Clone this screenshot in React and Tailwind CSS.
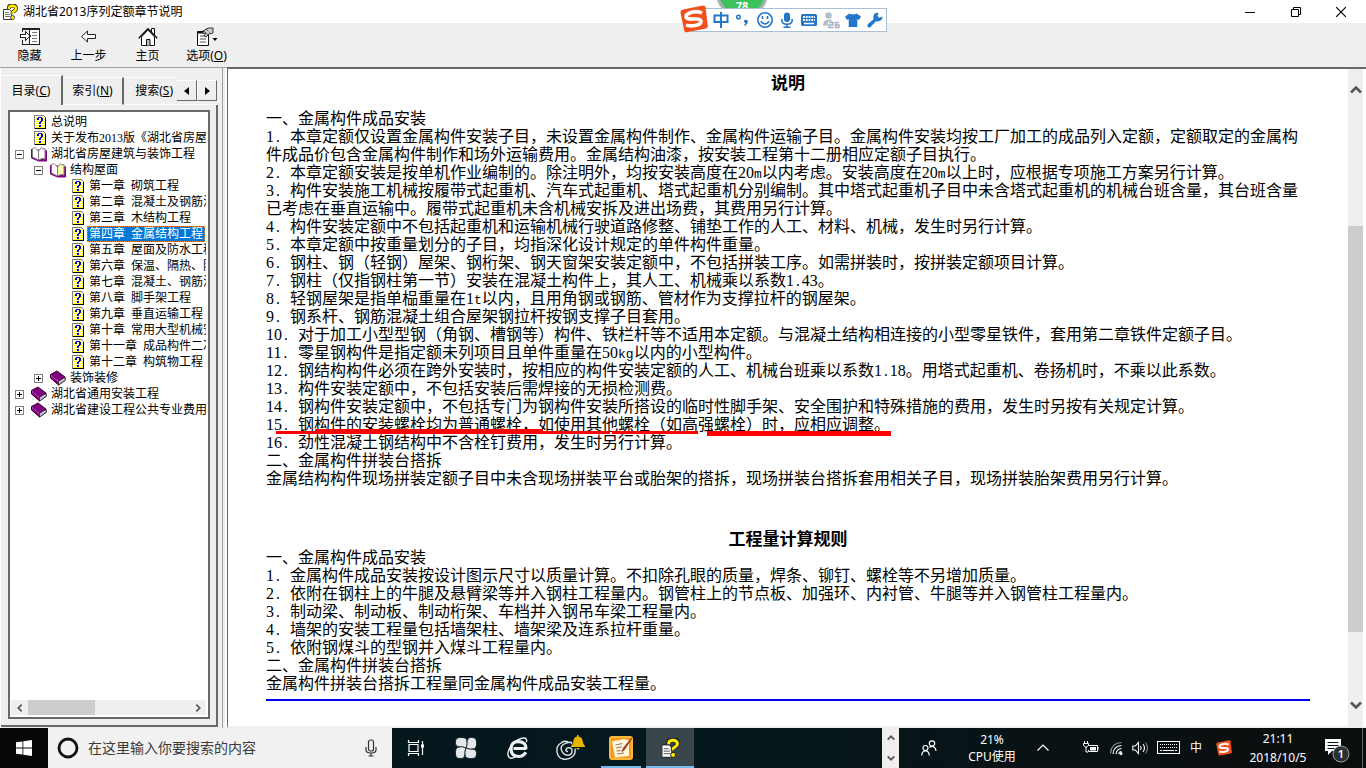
import React from "react";

const UI_FONT = "font-['Noto_Sans','Noto_Sans_CJK_SC',sans-serif]";
const TEXT_FONT = "font-['Noto_Sans_CJK_SC',sans-serif]";

/* Half-width runs: digits are half an em in the serif face, the other
   latin signs and spaces come from a monospace face at `size`. */
function Mixed({ text, size }) {
  return text.split(/([0-9]+|[^0-9\u0080-\uffff]+)/).map((part, i) => {
    if (/^[0-9]+$/.test(part)) {
      return (
        <span key={i} className="font-['Liberation_Serif',serif] leading-[0]">
          {part}
        </span>
      );
    }
    if (/^[\x20-\x7e]+$/.test(part)) {
      return (
        <span key={i} className={`whitespace-pre font-['Liberation_Mono',monospace] leading-[0] ${size}`}>
          {part}
        </span>
      );
    }
    return part;
  });
}

/* ---------- icons ---------- */

function AppIcon({ className }) {
  return (
    <svg viewBox="0 0 16 16" className={className} aria-hidden="true">
      <path d="M1.5 5.5h6l2 2v8h-8z" fill="#fff" stroke="#333" />
      <path d="M3 8.5h4M3 10.5h5M3 12.5h5" stroke="#777" />
      <path d="M7 5V3.5Q7 1.500 10.500 1.500T14 4.500Q14 6 12 7.200T10.700 9.500" fill="none" stroke="#222" strokeWidth="4" />
      <path d="M7 5V3.800Q7.500 1.800 10.500 1.800T14 4.500Q14 6 12 7.200T10.700 9.500" fill="none" stroke="#ffee00" strokeWidth="2.400" />
      <circle cx="10.500" cy="13.500" r="2" fill="#ffee00" stroke="#222" strokeWidth=".8" />
    </svg>
  );
}

function TopicIcon() {
  return (
    <svg viewBox="0 0 16 16" className="size-4 shrink-0" shapeRendering="crispEdges" aria-hidden="true">
      <path d="M3 1h9l3 3v11H3z" fill="#808080" />
      <path d="M4 2h8l2 2v10H4z" fill="#ffffd0" />
      <path d="M5 3.500h7M5 5.500h9M5 7.500h9M5 9.500h9M5 11.500h9M5 13.500h9" stroke="#ffff00" strokeDasharray="1 1" />
      <path d="M14 4h1v11H4v-1h10z" fill="#000" />
      <path d="M6 4h1V3h4v1h1v3h-1v1h-1v2H8V8h1V7h1V4H8v2H6zM8 11h2v2H8z" fill="#0000e0" />
    </svg>
  );
}

function OpenBookIcon({ page }) {
  return (
    <svg viewBox="0 0 16 16" className="size-4 shrink-0" aria-hidden="true">
      <path d="M0.500 3v9l7 3h8V5l-1-1" fill="#800080" stroke="#800080" />
      <path d="M1.500 2.500L4 1.500l3.500 3.500v9l-6-3z" fill="#fff" stroke="#808080" />
      <path d="M7.500 14V5l3-3.500 1 1.500 2.500-.5v10.500l-3-.5z" fill={page} stroke="#808080" />
    </svg>
  );
}

function ClosedBookIcon() {
  return (
    <svg viewBox="0 0 16 16" className="size-4 shrink-0" aria-hidden="true">
      <path d="M0.500 4.500L7 1l8 6v3.500L8.500 15l-8-7z" fill="#800080" stroke="#300030" />
      <path d="M8.500 11.500l6.500-4v3L8.500 15z" fill="#fff" stroke="#222" strokeWidth=".8" />
      <path d="M9 13.200l6-3.800" stroke="#808080" strokeWidth=".8" />
      <path d="M1 5.500l7.500 6" stroke="#e0b0e0" strokeDasharray="1 1" />
    </svg>
  );
}

function HideIcon() {
  return (
    <svg viewBox="0 0 20 20" className="size-5" shapeRendering="crispEdges" aria-hidden="true">
      <path d="M2.500 5V1.500h17v16h-17V13M9.500 1.500v16M2 2.500h17" fill="none" stroke="#222" />
      <path d="M10 3h9v14h-9z" fill="#fff" />
      <path d="M12 5.500h5M12 8.500h5M12 11.500h5M12 14.500h5" stroke="#777" />
      <path d="M.5 7.500h5v-3l5 4.500-5 4.500v-3h-5z" fill="#fff" stroke="#222" />
    </svg>
  );
}

function BackIcon() {
  return (
    <svg viewBox="0 0 20 20" className="size-5" aria-hidden="true">
      <path d="M2.500 9.500l6-5.500v3.500h8v4h-8V15z" fill="#fff" stroke="#222" />
    </svg>
  );
}

function HomeIcon() {
  return (
    <svg viewBox="0 0 20 20" className="size-5" aria-hidden="true">
      <path d="M13.500 5V1.500h3V8" fill="#fff" stroke="#111" />
      <path d="M3.500 10v8.500h13V10L10 3z" fill="#fff" stroke="#111" />
      <path d="M.7 11.300L10 1.700l9.300 9.600" fill="none" stroke="#111" strokeWidth="1.300" />
      <path d="M8.500 18.500v-6h3.500v6" fill="#bbb" stroke="#111" />
    </svg>
  );
}

function OptionsIcon() {
  return (
    <svg viewBox="0 0 22 20" className="h-5 w-[22px]" aria-hidden="true">
      <path d="M1.500 4.500h11v14h-11z" fill="#fff" stroke="#111" />
      <path d="M1 5.500h12" stroke="#111" strokeWidth="2" />
      <path d="M4 9h4M4 12h6M4 15h6" stroke="#555" />
      <path d="M6 6l4-4 3-1h4v5l-4 1-3 3-2-1 2-3z" fill="#ccc" stroke="#333" />
      <path d="M7 3l5 5M10 2l4 4" stroke="#333" strokeDasharray="1 1" />
      <path d="M16.500 11h5l-2.500 3z" fill="#000" />
    </svg>
  );
}

function Chevron({ d, className }) {
  return (
    <svg viewBox="0 0 12 12" className={className} aria-hidden="true">
      <path d={d} fill="none" stroke="currentColor" strokeWidth="2.600" />
    </svg>
  );
}

const UP = "M1 8.500l5-5 5 5";
const DOWN = "M1 3.500l5 5 5-5";
const LEFT = "M8.500 1l-5 5 5 5";
const RIGHT = "M3.500 1l5 5-5 5";

function SogouLogo({ className }) {
  return (
    <svg viewBox="0 0 28 28" className={className} aria-hidden="true">
      <path d="M3 4.500L23 .5q2-.2 2.500 1.500l2.300 19q.2 2-1.800 2.500L7 27.300q-2.200.4-2.800-1.800L.5 7.500Q.2 5.200 3 4.500z" fill="#f0501c" />
      <path d="M22 8q-5-2.500-11-.5t-5 4.500q1 2.500 8 2t7 2.500q0 3-6 4t-9-.5" fill="none" stroke="#fff" strokeWidth="3.600" />
    </svg>
  );
}

const imeIcons = [
  {
    label: "中文",
    art: (
      <path d="M3.500 5.500h13v6.500h-13zM10 2v16" fill="none" stroke="currentColor" strokeWidth="2" />
    ),
  },
  {
    label: "标点",
    art: (
      <>
        <circle cx="5.500" cy="7" r="1.800" fill="none" stroke="currentColor" strokeWidth="1.500" />
        <path d="M11 10.500q2-1.500 3.500 0t-2.500 5.500l-1-.8q1.500-1.200 1.300-2.400-1.800-.3-1.300-2.300z" fill="currentColor" />
      </>
    ),
  },
  {
    label: "表情",
    art: (
      <>
        <circle cx="10" cy="10" r="7.200" fill="none" stroke="currentColor" strokeWidth="1.600" />
        <path d="M7.500 6v3M12.500 6v3M5.800 11.200q4.200 5.500 8.400 0" fill="none" stroke="currentColor" strokeWidth="1.600" />
      </>
    ),
  },
  {
    label: "语音",
    art: (
      <>
        <rect x="7" y="2.500" width="6" height="9.500" rx="3" fill="currentColor" />
        <path d="M4.800 9v1q0 4.300 5.200 4.300t5.200-4.300V9M10 14v3M6.500 17.200h7" fill="none" stroke="currentColor" strokeWidth="1.600" />
      </>
    ),
  },
  {
    label: "软键盘",
    art: (
      <>
        <rect x="2" y="4" width="16" height="12" rx="1.500" fill="currentColor" />
        <path d="M4 7h12M4 10h12" stroke="#fff" strokeWidth="1.800" strokeDasharray="1.800 1" />
        <path d="M5 13.500h10" stroke="#fff" strokeWidth="1.500" />
      </>
    ),
  },
  {
    label: "账户",
    art: (
      <>
        <circle cx="7.500" cy="5.500" r="3.200" fill="#b3bdcd" />
        <path d="M2 15.500q0-6 5.500-6 3 0 4.500 2h-5v4z" fill="#b3bdcd" />
        <path d="M8 12.500h4v2.500H8v2.500h4.500M18 12.500h-3.500v5H18V15h-3.500" fill="none" stroke="#a5b0c2" strokeWidth="1.400" />
      </>
    ),
  },
  {
    label: "皮肤",
    art: <path d="M6.500 3.500q3.500 2 7 0l4.500 3-2 3.500-1.700-1v8H5.700V9L4 10 2 6.500z" fill="currentColor" />,
  },
  {
    label: "工具",
    art: (
      <path d="M17.300 6.500l-3 1.200-1.900-1.900 1.200-2.900Q10 2 8.800 5t.1 4L2.800 14.200q-1 1.500.1 2.700t2.600 0L11 11.200q3 .8 5-.9t1.300-3.800z" fill="currentColor" />
    ),
  },
];

/* ---------- data ---------- */

const tree = [
  { depth: 0, kind: "topic", label: "总说明" },
  { depth: 0, kind: "topic", label: "关于发布2013版《湖北省房屋" },
  { depth: 0, kind: "open", label: "湖北省房屋建筑与装饰工程", page: "#fff" },
  { depth: 1, kind: "open", label: "结构屋面", page: "#ffffb0" },
  { depth: 2, kind: "topic", label: "第一章 砌筑工程" },
  { depth: 2, kind: "topic", label: "第二章 混凝土及钢筋混" },
  { depth: 2, kind: "topic", label: "第三章 木结构工程" },
  { depth: 2, kind: "topic", label: "第四章 金属结构工程", selected: true },
  { depth: 2, kind: "topic", label: "第五章 屋面及防水工程" },
  { depth: 2, kind: "topic", label: "第六章 保温、隔热、防" },
  { depth: 2, kind: "topic", label: "第七章 混凝土、钢筋混" },
  { depth: 2, kind: "topic", label: "第八章 脚手架工程" },
  { depth: 2, kind: "topic", label: "第九章 垂直运输工程" },
  { depth: 2, kind: "topic", label: "第十章 常用大型机械安" },
  { depth: 2, kind: "topic", label: "第十一章 成品构件二次" },
  { depth: 2, kind: "topic", label: "第十二章 构筑物工程" },
  { depth: 1, kind: "closed", label: "装饰装修" },
  { depth: 0, kind: "closed", label: "湖北省通用安装工程" },
  { depth: 0, kind: "closed", label: "湖北省建设工程公共专业费用" },
];

const indent = ["pl-0", "pl-[19px]", "pl-[38px]"];

const notes = [
  ["", "一、金属构件成品安装"],
  ["1.", "本章定额仅设置金属构件安装子目，未设置金属构件制作、金属构件运输子目。金属构件安装均按工厂加工的成品列入定额，定额取定的金属构件成品价包含金属构件制作和场外运输费用。金属结构油漆，按安装工程第十二册相应定额子目执行。"],
  ["2.", "本章定额安装是按单机作业编制的。除注明外，均按安装高度在20m以内考虑。安装高度在20m以上时，应根据专项施工方案另行计算。"],
  ["3.", "构件安装施工机械按履带式起重机、汽车式起重机、塔式起重机分别编制。其中塔式起重机子目中未含塔式起重机的机械台班含量，其台班含量已考虑在垂直运输中。履带式起重机未含机械安拆及进出场费，其费用另行计算。"],
  ["4.", "构件安装定额中不包括起重机和运输机械行驶道路修整、铺垫工作的人工、材料、机械，发生时另行计算。"],
  ["5.", "本章定额中按重量划分的子目，均指深化设计规定的单件构件重量。"],
  ["6.", "钢柱、钢（轻钢）屋架、钢桁架、钢天窗架安装定额中，不包括拼装工序。如需拼装时，按拼装定额项目计算。"],
  ["7.", "钢柱（仅指钢柱第一节）安装在混凝土构件上，其人工、机械乘以系数1.43。"],
  ["8.", "轻钢屋架是指单榀重量在1t以内，且用角钢或钢筋、管材作为支撑拉杆的钢屋架。"],
  ["9.", "钢系杆、钢筋混凝土组合屋架钢拉杆按钢支撑子目套用。"],
  ["10.", "对于加工小型型钢（角钢、槽钢等）构件、铁栏杆等不适用本定额。与混凝土结构相连接的小型零星铁件，套用第二章铁件定额子目。"],
  ["11.", "零星钢构件是指定额未列项目且单件重量在50kg以内的小型构件。"],
  ["12.", "钢结构构件必须在跨外安装时，按相应的构件安装定额的人工、机械台班乘以系数1.18。用塔式起重机、卷扬机时，不乘以此系数。"],
  ["13.", "构件安装定额中，不包括安装后需焊接的无损检测费。"],
  ["14.", "钢构件安装定额中，不包括专门为钢构件安装所搭设的临时性脚手架、安全围护和特殊措施的费用，发生时另按有关规定计算。"],
  ["15.", "钢构件的安装螺栓均为普通螺栓，如使用其他螺栓（如高强螺栓）时，应相应调整。"],
  ["16.", "劲性混凝土钢结构中不含栓钉费用，发生时另行计算。"],
  ["", "二、金属构件拼装台搭拆"],
  ["", "金属结构构件现场拼装定额子目中未含现场拼装平台或胎架的搭拆，现场拼装台搭拆套用相关子目，现场拼装胎架费用另行计算。"],
];

const rules = [
  ["", "一、金属构件成品安装"],
  ["1.", "金属构件成品安装按设计图示尺寸以质量计算。不扣除孔眼的质量，焊条、铆钉、螺栓等不另增加质量。"],
  ["2.", "依附在钢柱上的牛腿及悬臂梁等并入钢柱工程量内。钢管柱上的节点板、加强环、内衬管、牛腿等并入钢管柱工程量内。"],
  ["3.", "制动梁、制动板、制动桁架、车档并入钢吊车梁工程量内。"],
  ["4.", "墙架的安装工程量包括墙架柱、墙架梁及连系拉杆重量。"],
  ["5.", "依附钢煤斗的型钢并入煤斗工程量内。"],
  ["", "二、金属构件拼装台搭拆"],
  ["", "金属构件拼装台搭拆工程量同金属构件成品安装工程量。"],
];

/* ---------- parts ---------- */

function TitleBar() {
  return (
    <header className="flex h-[23px] shrink-0 items-center bg-white">
      <AppIcon className="ml-0.5 size-4" />
      <h1 className="ml-[5px] flex-1 text-xs text-black">湖北省2013序列定额章节说明</h1>
      <div className="flex pr-0.5 text-black">
        <button type="button" aria-label="最小化" className="flex h-5 w-[46px] items-center justify-center">
          <svg viewBox="0 0 10 10" className="size-2.5"><path d="M0 5.500h10" stroke="currentColor" /></svg>
        </button>
        <button type="button" aria-label="还原" className="flex h-5 w-[45px] items-center justify-center">
          <svg viewBox="0 0 10 10" className="size-2.5"><path d="M.5 2.500h7v7h-7zM2.500 2.500v-2h7v7h-2" fill="none" stroke="currentColor" /></svg>
        </button>
        <button type="button" aria-label="关闭" className="flex h-5 w-[46px] items-center justify-center">
          <svg viewBox="0 0 10 10" className="size-2.5"><path d="M0 0l10 10M10 0L0 10" stroke="currentColor" strokeWidth="1.200" /></svg>
        </button>
      </div>
    </header>
  );
}

function ToolBar() {
  const items = [
    [<HideIcon />, "隐藏"],
    [<BackIcon />, "上一步"],
    [<HomeIcon />, "主页"],
    [<OptionsIcon />, <>选项(<u>O</u>)</>],
  ];
  return (
    <nav className="flex h-11 shrink-0 bg-[#efefef]">
      {items.map(([icon, label], i) => (
        <button key={i} type="button" className="flex w-[59px] flex-col items-center pt-1 text-xs leading-[18px] whitespace-nowrap text-black">
          {icon}
          <span>{label}</span>
        </button>
      ))}
    </nav>
  );
}

function TreeRow({ item }) {
  const hasToggle = item.kind !== "topic";
  return (
    <li className={`flex h-4 items-center ${indent[item.depth]}`}>
      <span className="flex w-5 shrink-0 justify-start pl-1">
        {hasToggle && (
          <button type="button" aria-label={item.kind === "open" ? "折叠" : "展开"} className="size-[9px]">
            <svg viewBox="0 0 9 9" className="size-[9px]" shapeRendering="crispEdges">
              <path d="M.5 .5h8v8h-8z" fill="#fff" stroke="#808080" />
              <path d={item.kind === "open" ? "M2 4.500h5" : "M2 4.500h5M4.500 2v5"} stroke="#000" />
            </svg>
          </button>
        )}
      </span>
      {item.kind === "topic" && <TopicIcon />}
      {item.kind === "open" && <OpenBookIcon page={item.page} />}
      {item.kind === "closed" && <ClosedBookIcon />}
      <a
        href="#"
        className={`ml-0.5 h-4 px-0.5 text-xs leading-4 whitespace-nowrap ${
          item.selected ? "bg-[#0078d7] text-white outline-1 -outline-offset-1 outline-dotted outline-[#ff8728]" : "text-black"
        }`}
      >
        <Mixed text={item.label} size="text-[10px]" />
      </a>
    </li>
  );
}

function Sidebar() {
  return (
    <aside className="flex w-[219px] shrink-0 flex-col border-l border-white bg-[#efefef] pt-[7px] pr-px pb-px">
      <div className="flex h-[30px] shrink-0 items-end pr-px text-xs text-black" role="tablist">
        <button type="button" role="tab" aria-selected="true" className="flex h-[30px] w-[62px] items-center justify-center border-t border-r-2 border-t-white border-r-[#696969]">
          <span>目录(<u>C</u>)</span>
        </button>
        <button type="button" role="tab" aria-selected="false" className="flex h-7 w-[61px] items-center justify-center border-t border-r-2 border-b border-t-white border-r-[#696969] border-b-white">
          <span>索引(<u>N</u>)</span>
        </button>
        <button type="button" role="tab" aria-selected="false" className="flex h-7 min-w-0 flex-1 items-center justify-end border-t border-b border-white pr-1 whitespace-nowrap">
          <span>搜索(<u>S</u>)</span>
        </button>
        <div className="flex h-7 items-center border-b border-white">
          <button type="button" aria-label="向左" className="flex h-[21px] w-5 items-center justify-center border-t border-r border-b border-t-white border-r-[#696969] border-b-[#696969]">
            <svg viewBox="0 0 5 8" className="h-2 w-[5px]"><path d="M5 0v8L0 4z" /></svg>
          </button>
          <button type="button" aria-label="向右" className="flex h-[21px] w-5 items-center justify-center border-t border-r border-b border-l border-t-white border-r-[#696969] border-b-[#696969] border-l-white">
            <svg viewBox="0 0 5 8" className="h-2 w-[5px]"><path d="M0 0v8l5-4z" /></svg>
          </button>
        </div>
      </div>
      <div className="flex min-h-0 flex-1 flex-col border-r-2 border-b-2 border-[#696969] pt-[5px] pr-[6px] pb-[6px] pl-[7px]">
        <div className="flex min-h-0 flex-1 flex-col border-2 border-[#696969] bg-white pl-px pr-0.5 pb-0.5">
          <ul className="min-h-0 flex-1 overflow-hidden pt-0.5">
            {tree.map((item) => (
              <TreeRow key={item.label} item={item} />
            ))}
          </ul>
          <div className="flex h-[15px] shrink-0 items-center bg-[#efefef] text-[#555]">
            <button type="button" aria-label="向左滚动" className="flex w-[17px] justify-center">
              <Chevron d={LEFT} className="size-2" />
            </button>
            <div className="h-[15px] w-[67px] bg-[#cdcdcd]" />
            <button type="button" aria-label="向右滚动" className="ml-auto flex w-[17px] justify-center">
              <Chevron d={RIGHT} className="size-2" />
            </button>
          </div>
        </div>
      </div>
    </aside>
  );
}

function Clause({ no, text }) {
  return (
    <p className="relative">
      {no && (
        <span className={`inline-block leading-[0] ${no.length > 2 ? "w-8" : "w-6"}`}>
          <Mixed text={no} size="text-[13px]" />
        </span>
      )}
      <Mixed text={text} size="text-[13px]" />
      {no === "15." && (
        <>
          <span className="absolute top-[17px] left-[10px] h-[3px] w-[334px] bg-[#ff0000]" />
          <span className="absolute top-[15px] left-[49px] h-[5px] w-[228px] bg-[#ff0000]" />
          <span className="absolute top-[17px] left-[346px] h-[3px] w-[86px] bg-[#ff0000]" />
          <span className="absolute top-[17px] left-[441px] h-[5px] w-[184px] bg-[#ff0000]" />
        </>
      )}
    </p>
  );
}

function Document() {
  return (
    <main className="flex min-w-0 flex-1 border-t-2 border-b-2 border-l border-t-[#696969] border-b-[#f0f0f0] border-l-[#696969] bg-white">
      <article className={`min-w-0 flex-1 overflow-hidden px-[38px] pt-1 text-base leading-[18px] text-black ${TEXT_FONT}`}>
        <h2 className="text-center text-[17px] leading-[18px] font-bold">说明</h2>
        <section className="pt-[17px]">
          {notes.map(([no, text]) => (
            <Clause key={no + text} no={no} text={text} />
          ))}
        </section>
        <h2 className="pt-[43px] text-center text-[17px] leading-[18px] font-bold">工程量计算规则</h2>
        <section>
          {rules.map(([no, text]) => (
            <Clause key={no + text} no={no} text={text} />
          ))}
        </section>
        <hr className="mt-2 border-t-2 border-[#0000ff]" />
      </article>
      <div className="mr-[3px] flex w-[15px] shrink-0 flex-col items-center bg-[#efefef] py-[15px] text-[#555]">
        <button type="button" aria-label="向上滚动"><Chevron d={UP} className="size-3" /></button>
        <div className="flex w-full flex-1 flex-col pt-[130px]">
          <div className="h-[406px] w-full bg-[#cdcdcd]" />
        </div>
        <button type="button" aria-label="向下滚动"><Chevron d={DOWN} className="size-3" /></button>
      </div>
    </main>
  );
}

function ImeBar() {
  return (
    <div className="absolute top-0 left-[679px] h-9 w-[208px]">
      <div className="absolute top-0 left-[37px] h-3 w-[52px] overflow-hidden">
        <div className="absolute -top-[34px] left-0 flex size-[52px] items-end justify-center rounded-full border-3 border-[#a9aeb0] bg-[#3cc25a] pb-1 font-['Noto_Sans',sans-serif] text-[11px] leading-none font-bold text-white shadow">
          78
        </div>
      </div>
      <div className="absolute top-2 left-3 flex h-6 w-[196px] items-center border border-[#a9c0d8] bg-white pl-[18px] text-[#2376c9]">
        {imeIcons.map(({ label, art }) => (
          <button key={label} type="button" aria-label={label} className="flex w-[22px] justify-center">
            <svg viewBox="0 0 20 20" className="size-5">{art}</svg>
          </button>
        ))}
      </div>
      <SogouLogo className="absolute top-[5px] left-px size-7" />
    </div>
  );
}

function TaskBar() {
  return (
    <footer className="flex h-10 shrink-0 bg-linear-to-r from-[#04161b] via-[#04181d] to-[#0b0d0d] text-white">
      <button type="button" aria-label="开始" className="flex w-12 items-center justify-center bg-[#060707]">
        <svg viewBox="0 0 16 16" className="size-4" fill="#fff">
          <path d="M0 2.300l6.500-.9v6.200H0zM7.300 1.300L16 0v7.600H7.300zM0 8.400h6.500v6.200L0 13.700zM7.300 8.400H16V16l-8.700-1.300z" />
        </svg>
      </button>
      <label className="flex w-[344px] items-center bg-[#f1f1f1] text-[#333]">
        <svg viewBox="0 0 22 22" className="ml-[9px] size-[22px]" aria-hidden="true">
          <circle cx="11" cy="11" r="9" fill="none" stroke="#111" strokeWidth="2.800" />
        </svg>
        <input
          type="text"
          aria-label="搜索"
          placeholder="在这里输入你要搜索的内容"
          className="ml-[9px] min-w-0 flex-1 bg-transparent text-sm outline-none placeholder:text-[#3a3a3a] placeholder:opacity-100"
        />
        <svg viewBox="0 0 12 18" className="mr-[15px] h-[18px] w-3" fill="none" stroke="#333" strokeWidth="1.200" aria-hidden="true">
          <rect x="3.500" y="1" width="5" height="11" rx="2" />
          <path d="M1 8v3q0 3 5 3t5-3V8M6 14v3M3.500 17h5" />
        </svg>
      </label>
      <button type="button" aria-label="任务视图" className="flex w-12 items-center justify-center">
        <svg viewBox="0 0 18 16" className="h-4 w-[18px]" fill="none" stroke="#fff" strokeWidth="1.200">
          <path d="M2 4.500h9v7H2zM1.500 0v2.500h10V0M1.500 16v-2.500h10V16M15.500 1v14" />
          <path d="M14 4.500h3v3h-3z" fill="#fff" stroke="none" />
        </svg>
      </button>
      <button type="button" aria-label="四叶" className="flex w-[52px] items-center justify-center">
        <svg viewBox="0 0 24 24" className="size-6">
          {[0, 90, 180, 270].map((a) => (
            <path key={a} transform={`rotate(${a} 12 12)`} d="M12 12Q14.500 7.500 12.500 3.500 11.500 1.500 8.500 1.500H6Q1.500 1.500 1.500 6v1.500Q1.500 10.500 5 10.800 9.500 10.500 12 12z" fill="#e4e8e8" stroke="#04161b" strokeWidth=".8" />
          ))}
        </svg>
      </button>
      <button type="button" aria-label="浏览器" className="flex w-[52px] items-center justify-center">
        <svg viewBox="0 0 24 24" className="size-6" fill="none" stroke="#eef2f2">
          <path d="M20.500 12.500H7.500M20 13q.3-7-7.300-7.300T5 13q.3 7.500 7.800 7.500 4.700-.2 7-4.300" strokeWidth="3.200" />
          <path d="M20.500 6Q21.500.5 15 2.500 7 5.500 3.500 12.500T4 22q2 1 6-1.500" strokeWidth="1.400" />
        </svg>
      </button>
      <button type="button" aria-label="提醒" className="flex w-[52px] items-center justify-center">
        <svg viewBox="0 0 30 26" className="h-[26px] w-[30px]" fill="none">
          <path d="M13 16.500q-2.500 0-2-2t3.500-1.800 2.500 4-4.500 3.500-6-5 4.500-7 5.500 1M20 13.500q1 5.500-3 8.500t-9 2-6-7 4-9q3-3 7-1" stroke="#dfe5e5" strokeWidth="1.400" />
          <path d="M16 11q2.500-2 2.500-5.500Q19 2 22 1.500V0h1.500v1.500q3.500.5 4 4T30 11v1H16zM21 13h4l-2 2z" fill="#e8b400" />
        </svg>
      </button>
      <button type="button" aria-label="记事" className="flex w-[50px] flex-col items-center">
        <span className="flex flex-1 items-center">
          <svg viewBox="0 0 24 24" className="mt-0.5 size-6">
            <rect width="24" height="24" rx="3" fill="#f29a1d" />
            <rect x="1" y="1" width="22" height="22" rx="2" fill="none" stroke="#ffd35c" />
            <path d="M3 5.500L15 3l5 1.500V20L6 21.500z" fill="#fff6dc" />
            <path d="M6.500 9l7-1.500M7 12l6-1M7.500 15l4-.7M8 18l7-1" stroke="#9a8060" strokeWidth="1.200" />
            <path d="M22.500 1.500L14 12l-2 4.500 3.500-2.500L23 3z" fill="#a5371a" />
          </svg>
        </span>
        <span className="h-0.5 w-10 bg-[#76b9ed]" />
      </button>
      <button type="button" aria-label="帮助" className="flex w-12 flex-col items-center bg-[#39474c]">
        <span className="flex flex-1 items-center pt-0.5">
          <AppIcon className="size-5" />
        </span>
        <span className="h-0.5 w-full bg-[#76b9ed]" />
      </button>
      <div className="ml-auto flex w-[17px] flex-col items-center justify-between bg-[#efefef] py-1.5 text-[#555]">
        <button type="button" aria-label="上"><Chevron d={UP} className="size-2" /></button>
        <button type="button" aria-label="下"><Chevron d={DOWN} className="size-2" /></button>
      </div>
      <button type="button" aria-label="人脉" className="flex w-[60px] items-center justify-center">
        <svg viewBox="0 0 16 16" className="size-4" fill="none" stroke="#fff" strokeWidth="1.200">
          <circle cx="4.500" cy="8" r="2.500" />
          <path d="M.8 15.500q0-4.500 3.700-4.500t3.700 4.500" />
          <circle cx="11" cy="3.500" r="2.700" />
          <path d="M8.500 7.500Q11 5.500 13 7t2 4" />
        </svg>
      </button>
      <div className="flex w-[66px] flex-col items-center justify-center text-xs leading-[17px]">
        <span>21%</span>
        <span>CPU使用</span>
      </div>
      <div className="flex items-center">
        <button type="button" aria-label="显示隐藏的图标" className="flex w-9 justify-center">
          <svg viewBox="0 0 12 12" className="size-3"><path d="M.5 8.500L6 3l5.500 5.500" fill="none" stroke="#fff" strokeWidth="1.200" /></svg>
        </button>
        <button type="button" aria-label="电源" className="ml-[18px] flex w-6 justify-center">
          <svg viewBox="0 0 16 14" className="h-3.5 w-4" fill="none" stroke="#fff">
            <path d="M6 4.500h8.500v6h-9V9M15 6v3" />
            <path d="M7 6h6v3.500H7z" fill="#fff" stroke="none" />
            <path d="M1.500 0v2M4.500 0v2M.5 2.500h5v2L3 6.500.5 4.500zM3 6v5h2" />
          </svg>
        </button>
        <button type="button" aria-label="网络" className="flex w-[25px] justify-center">
          <svg viewBox="0 0 14 14" className="size-3.5" fill="none" stroke="#fff" strokeWidth="1.100">
            <path d="M1.500 12.500Q2 2 12.500 1.500" opacity=".6" />
            <path d="M4 13q.5-8 8.500-8.500M7 13q.5-5 5.500-5.500M9.500 13q.5-2.500 3-2.800" />
            <circle cx="12" cy="12.500" r="1" fill="#fff" />
          </svg>
        </button>
        <button type="button" aria-label="音量" className="flex w-6 justify-center">
          <svg viewBox="0 0 17 14" className="h-3.5 w-[17px]" fill="none" stroke="#fff" strokeWidth="1.100">
            <path d="M.8 5h2.500L6.500 1.500v11L3.300 9H.8zM8.500 5q1.500 2 0 4M11 3q3 4 0 8" />
            <path d="M13.500 1.500q4 5.500 0 11" opacity=".5" />
          </svg>
        </button>
        <button type="button" aria-label="触摸键盘" className="flex w-8 justify-center">
          <svg viewBox="0 0 23 14" className="h-3.5 w-[23px]" fill="none" stroke="#fff" shapeRendering="crispEdges">
            <path d="M.5 .5h22v12H.5z" />
            <path d="M3 3.500h17M3 6.500h17" strokeDasharray="1 1" />
            <path d="M3 9.500h2M6 9.500h11M18 9.500h2" />
          </svg>
        </button>
        <button type="button" className="w-6 text-center text-xs">中</button>
        <button type="button" aria-label="搜狗输入法" className="flex w-8 justify-center">
          <SogouLogo className="size-4" />
        </button>
      </div>
      <div className="flex w-[76px] flex-col items-center justify-center text-xs leading-[19px]">
        <time>21:11</time>
        <time>2018/10/5</time>
      </div>
      <button type="button" aria-label="通知" className="flex w-[47px] items-center justify-center border-r border-[#59686c]">
        <svg viewBox="0 0 26 26" className="-ml-1 mt-1 size-[26px]">
          <path d="M1 2h16v12H8l-4 4v-4H1z" fill="#fff" />
          <path d="M3.500 5.500h11M3.500 8.500h11M3.500 11.500h7" stroke="#0b1518" />
          <circle cx="17" cy="17" r="8" fill="#2c3133" stroke="#9aa0a2" />
          <text x="17" y="21" textAnchor="middle" fontSize="11" fontWeight="600" fontFamily="Noto Sans, sans-serif" fill="#fff">1</text>
        </svg>
      </button>
      <div className="w-[3px]" />
    </footer>
  );
}

export default function App() {
  return (
    <div className={`relative flex h-screen flex-col overflow-hidden bg-[#efefef] ${UI_FONT}`}>
      <TitleBar />
      <ToolBar />
      <div className="flex min-h-0 flex-1">
        <div className="flex shrink-0 border-t border-[#a0a0a0]">
          <Sidebar />
          <div className="ml-[3px] w-[5px] border-r-2 border-l border-r-white border-l-[#a0a0a0]" />
        </div>
        <Document />
      </div>
      <TaskBar />
      <ImeBar />
    </div>
  );
}
